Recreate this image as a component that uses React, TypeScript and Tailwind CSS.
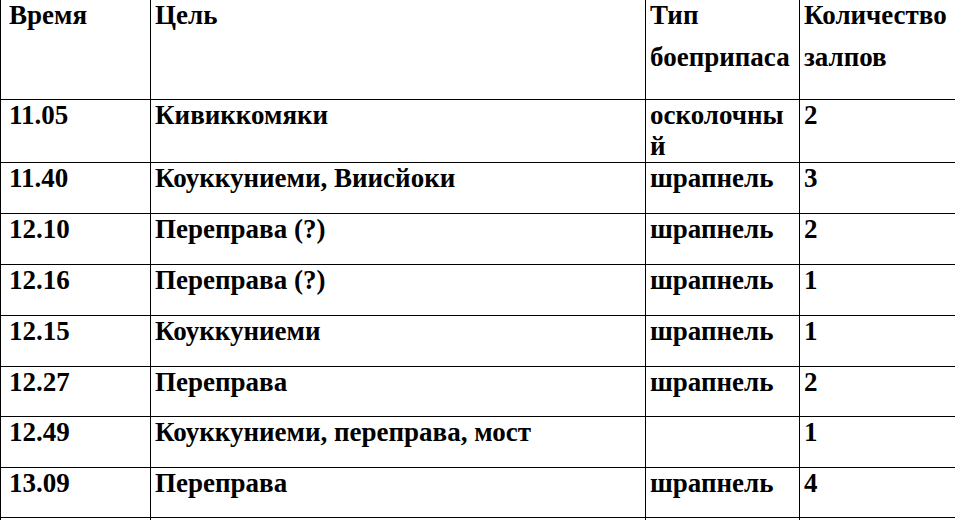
const rows: { time: string; target: string; ammo: string[]; count: string; h: string }[] = [
  { time: '11.05', target: 'Кивиккомяки', ammo: ['осколочны', 'й'], count: '2', h: 'h-[63px]' },
  { time: '11.40', target: 'Коуккуниеми, Виисйоки', ammo: ['шрапнель'], count: '3', h: 'h-[51px]' },
  { time: '12.10', target: 'Переправа (?)', ammo: ['шрапнель'], count: '2', h: 'h-[51px]' },
  { time: '12.16', target: 'Переправа (?)', ammo: ['шрапнель'], count: '1', h: 'h-[51px]' },
  { time: '12.15', target: 'Коуккуниеми', ammo: ['шрапнель'], count: '1', h: 'h-[51px]' },
  { time: '12.27', target: 'Переправа', ammo: ['шрапнель'], count: '2', h: 'h-[50px]' },
  { time: '12.49', target: 'Коуккуниеми, переправа, мост', ammo: [], count: '1', h: 'h-[51px]' },
  { time: '13.09', target: 'Переправа', ammo: ['шрапнель'], count: '4', h: 'h-[50px]' },
  { time: '', target: '', ammo: [], count: '', h: 'h-[51px]' },
]

function Cell({ children, w, pad = 'pl-[4px]', h }: { children?: any; w: string; pad?: string; h: string }) {
  return (
    <div className={`${w} ${h} ${pad} shrink-0 border-r border-b border-black overflow-hidden whitespace-nowrap`}>
      {children}
    </div>
  )
}

export default function App() {
  return (
    <div className="w-[955px] h-[520px] overflow-hidden bg-white text-black [font-family:'Liberation_Serif',serif] text-[27px] font-bold leading-[31px]">
      <div className="border-l border-black w-[1000px]">
        {/* Header */}
        <div className="flex">
          <Cell w="w-[150px]" h="h-[100px]" pad="pl-[8px]">
            <div>Время</div>
          </Cell>
          <Cell w="w-[495px]" h="h-[100px]">
            <div>Цель</div>
          </Cell>
          <Cell w="w-[154px]" h="h-[100px]">
            <div>Тип</div>
            <div className="mt-[11px]">боеприпаса</div>
          </Cell>
          <Cell w="w-[200px]" h="h-[100px]">
            <div>Количество</div>
            <div className="mt-[11px]">залпов</div>
          </Cell>
        </div>

        {rows.map((r, i) => (
          <div key={i} className="flex">
            <Cell w="w-[150px]" h={r.h} pad="pl-[8px]">
              {r.time}
            </Cell>
            <Cell w="w-[495px]" h={r.h}>
              {r.target}
            </Cell>
            <Cell w="w-[154px]" h={r.h}>
              {r.ammo.map((a, j) => (
                <div key={j}>{a}</div>
              ))}
            </Cell>
            <Cell w="w-[200px]" h={r.h}>
              {r.count}
            </Cell>
          </div>
        ))}
      </div>
    </div>
  )
}
